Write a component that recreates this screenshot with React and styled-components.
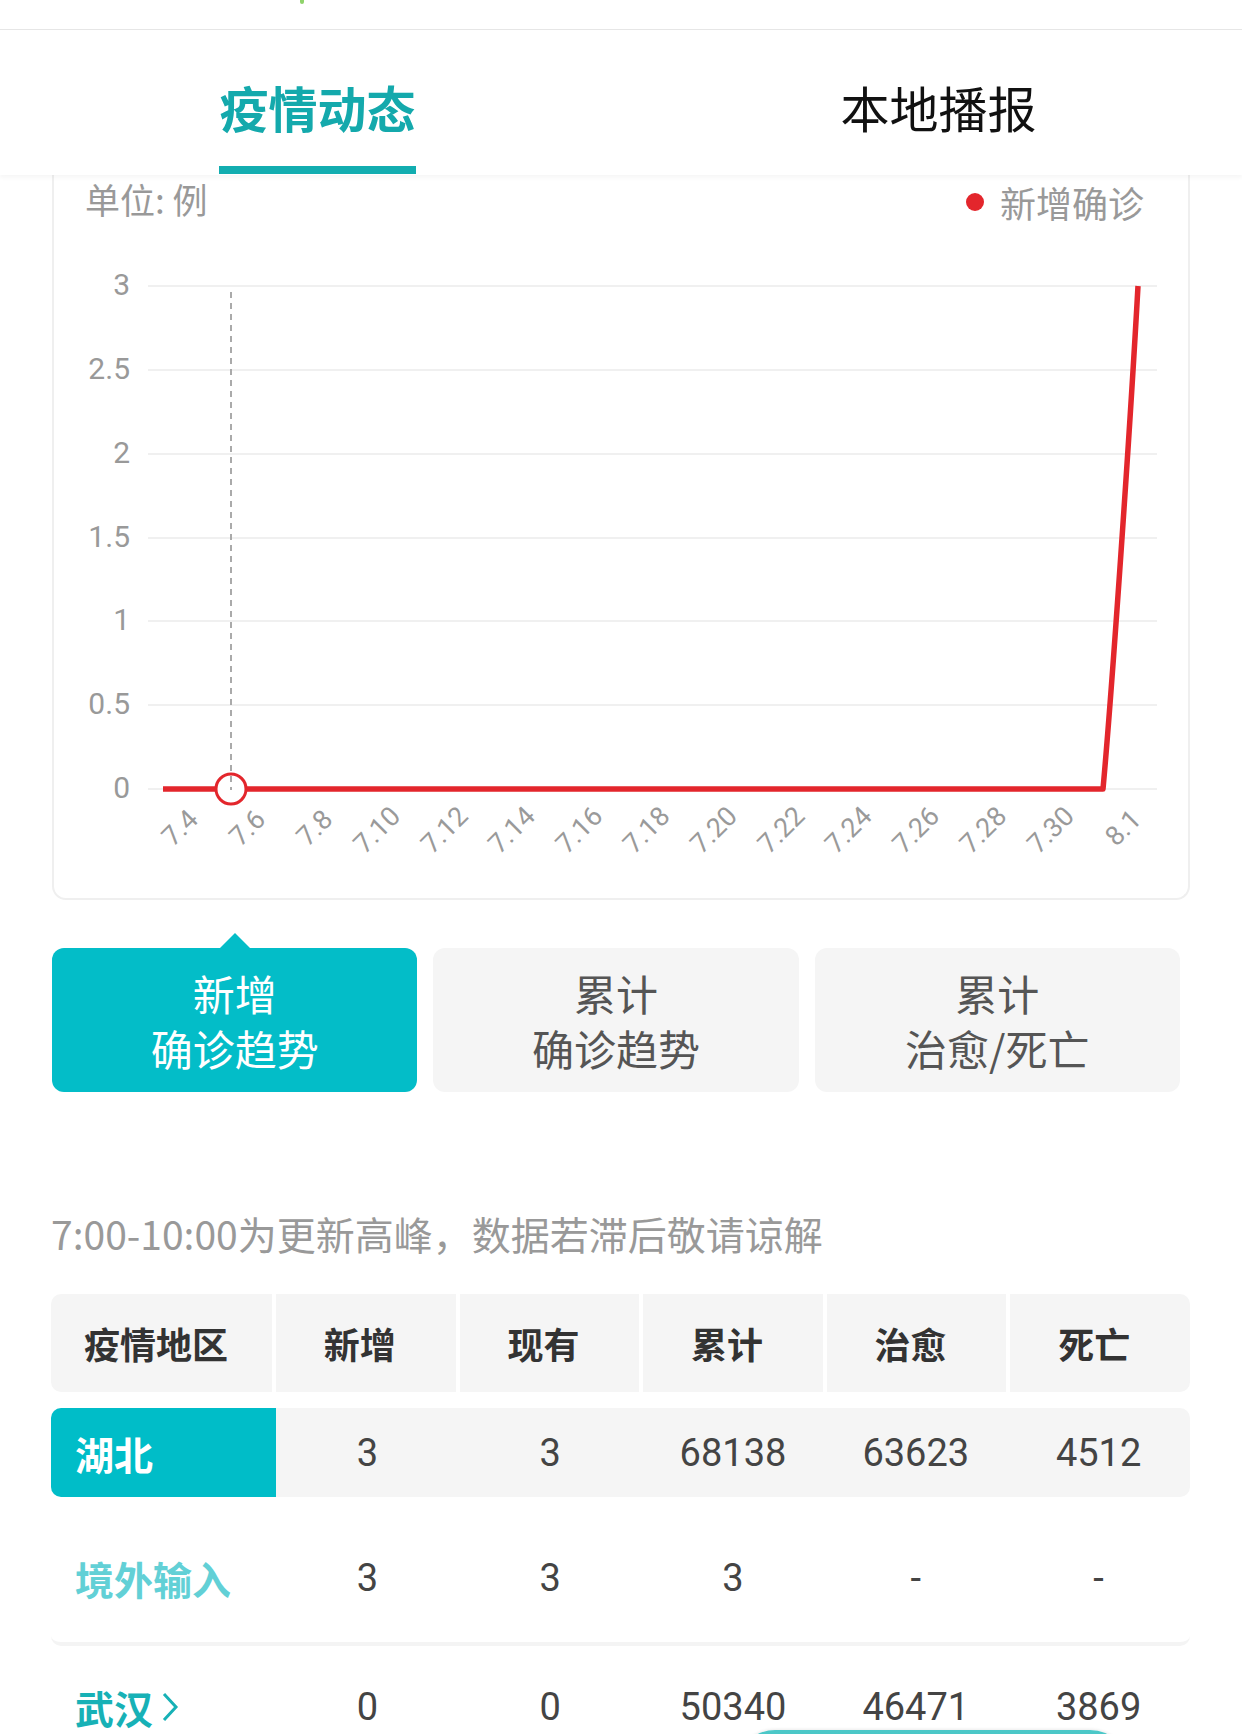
import React from "react";
import styled, { createGlobalStyle, css } from "styled-components";

const Global = createGlobalStyle`
  html, body { margin: 0; padding: 0; background: #fff; }
  body { width: 1242px; font-family: "Noto Sans CJK SC", "Noto Sans", sans-serif; overflow: hidden; }
  * { box-sizing: border-box; }
`;

const Page = styled.div`
  position: relative;
  width: 1242px;
  min-height: 1734px;
  overflow: hidden;
`;

const TopStrip = styled.div`
  height: 30px;
  border-bottom: 1px solid #e6e6e6;
  position: relative;
`;

const GreenSpeck = styled.span`
  position: absolute;
  left: 300px;
  top: 0;
  width: 4px;
  height: 4px;
  border-radius: 0 0 2px 2px;
  background: #8fd36b;
`;

const TabBar = styled.div`
  display: flex;
  height: 145px;
  padding-left: 7px;
  background: #fff;
  box-shadow: 0 3px 4px rgba(0, 0, 0, 0.035);
  position: relative;
  z-index: 1;
`;

const Tab = styled.div`
  flex: 0 0 621px;
  display: flex;
  justify-content: center;
`;

const TabInner = styled.div`
  display: flex;
  flex-direction: column;
  align-items: stretch;
  padding-top: 52px;
`;

const TabLabel = styled.div`
  font-size: 49px;
  line-height: 50px;
  font-weight: ${(p) => (p.$active ? 700 : 400)};
  color: ${(p) => (p.$active ? "#14a9ac" : "#111")};
`;

const TabLine = styled.div`
  margin-top: 34px;
  height: 8px;
  background: ${(p) => (p.$active ? "#12adb0" : "transparent")};
`;

const ChartCard = styled.div`
  margin: 0 52px;
  height: 725px;
  border: 2px solid #efefef;
  border-top: none;
  border-radius: 0 0 14px 14px;
  display: flex;
  flex-direction: column;
`;

const ChartHead = styled.div`
  height: 48px;
  display: flex;
  align-items: center;
  justify-content: space-between;
  padding: 0 44px 0 31px;
  color: #999;
`;

const Unit = styled.span`
  font-size: 35px;
  line-height: 40px;
`;

const Legend = styled.span`
  display: flex;
  align-items: center;
  gap: 16px;
  font-size: 36px;
  line-height: 40px;
  margin-top: 6px;
`;

const LegendDot = styled.span`
  width: 18px;
  height: 18px;
  border-radius: 50%;
  background: #e3262c;
`;

const Plot = styled.svg`
  display: block;
  font-family: Roboto, "Liberation Sans", sans-serif;
`;

const Buttons = styled.div`
  display: flex;
  gap: 16px;
  margin: 48px 62px 0 52px;
`;

const TrendBtn = styled.div`
  position: relative;
  flex: 1;
  height: 144px;
  border-radius: 12px;
  display: flex;
  flex-direction: column;
  align-items: center;
  justify-content: center;
  font-size: 42px;
  line-height: 55px;
  background: ${(p) => (p.$active ? "#03bdc8" : "#f5f5f5")};
  color: ${(p) => (p.$active ? "#fff" : "#555")};
  ${(p) =>
    p.$active &&
    css`
      &::before {
        content: "";
        position: absolute;
        top: -15px;
        left: 50%;
        transform: translateX(-50%);
        border-left: 16px solid transparent;
        border-right: 16px solid transparent;
        border-bottom: 16px solid #03bdc8;
      }
    `}
`;

const Notice = styled.div`
  margin: 119px 0 0 51px;
  font-size: 39px;
  line-height: 44px;
  color: #999;
`;

const Table = styled.div`
  margin: 39px 52px 0 51px;
`;

const HeadRow = styled.div`
  display: grid;
  grid-template-columns: 221px repeat(5, 1fr);
  column-gap: 4px;
  height: 98px;
`;

const HeadCell = styled.div`
  background: #f5f5f5;
  display: flex;
  align-items: center;
  justify-content: center;
  padding-right: 12px;
  font-size: 36px;
  font-weight: 700;
  color: #333;
  &:first-child {
    border-radius: 10px 0 0 10px;
    justify-content: flex-start;
    padding: 0 0 0 33px;
  }
  &:last-child { border-radius: 0 10px 10px 0; }
`;

const DataRow = styled.div`
  display: grid;
  grid-template-columns: 225px repeat(5, 1fr);
  align-items: center;
  margin-top: ${(p) => p.$mt || 0}px;
  height: ${(p) => p.$h}px;
  border-radius: 10px;
  overflow: hidden;
  background: ${(p) => (p.$shaded ? "#f5f5f5" : "transparent")};
  border-bottom: ${(p) => (p.$divider ? "4px solid #f4f4f4" : "none")};
`;

const RegionCell = styled.div`
  height: 100%;
  display: flex;
  align-items: center;
  gap: 8px;
  padding-left: 24px;
  font-size: 39px;
  font-weight: 700;
  color: ${(p) => p.$color};
  background: ${(p) => p.$bg || "transparent"};
`;

const NumCell = styled.div`
  text-align: center;
  font-family: Roboto, "Liberation Sans", sans-serif;
  font-size: 38px;
  color: #444;
`;

const FloatBtn = styled.div`
  position: absolute;
  left: 735px;
  top: 1730px;
  width: 395px;
  height: 80px;
  border-radius: 40px;
  background: linear-gradient(#4cc8c8, #2fb9bc);
  box-shadow: 0 -1px 3px rgba(0, 0, 0, 0.08);
`;

const Chevron = () => (
  <svg width="18" height="32" viewBox="0 0 18 32">
    <polyline points="3,3 15,16 3,29" fill="none" stroke="#17b1b6" strokeWidth="3" />
  </svg>
);

// chart coordinates: origin at (54, 223) in page space
const OX = 54;
const OY = 223;
const gridYs = [286, 370, 454, 538, 621, 705, 789];
const yLabels = ["3", "2.5", "2", "1.5", "1", "0.5", "0"];
const xLabels = ["7.4", "7.6", "7.8", "7.10", "7.12", "7.14", "7.16", "7.18", "7.20", "7.22", "7.24", "7.26", "7.28", "7.30", "8.1"];

const Chart = () => (
  <Plot width="1134" height="675" viewBox={`${OX} ${OY} 1134 675`}>
    {gridYs.map((y) => (
      <line key={y} x1="148" x2="1157" y1={y} y2={y} stroke="#f0f0f0" strokeWidth="2" />
    ))}
    {gridYs.map((y, i) => (
      <text key={"l" + y} x="130" y={y - 2} textAnchor="end" dominantBaseline="central" fontSize="30" fill="#999">
        {yLabels[i]}
      </text>
    ))}
    <path d="M163,789 L1103,789 C1112,690 1130,430 1138,286" fill="none" stroke="#e3262c" strokeWidth="5.5" strokeLinejoin="round" />
    <circle cx="231" cy="789" r="15" fill="#fff" stroke="#e3262c" strokeWidth="3" />
    <line x1="231" x2="231" y1="292" y2="790" stroke="#aaa" strokeWidth="2" strokeDasharray="6 5" />
    {xLabels.map((t, i) => {
      const cx = 180 + i * 67.36 - (t.length === 4 ? 5 : 0);
      const cy = t.length === 4 ? 830 : 828;
      return (
        <text
          key={t}
          x={cx}
          y={cy}
          textAnchor="middle"
          dominantBaseline="central"
          fontSize="27"
          fill="#9a9a9a"
          transform={`rotate(-45 ${cx} ${cy})`}
        >
          {t}
        </text>
      );
    })}
  </Plot>
);

const rows = [
  { name: "湖北", vals: ["3", "3", "68138", "63623", "4512"] },
  { name: "境外输入", vals: ["3", "3", "3", "-", "-"] },
  { name: "武汉", vals: ["0", "0", "50340", "46471", "3869"] },
];

export default function App() {
  return (
    <Page>
      <Global />
      <TopStrip>
        <GreenSpeck />
      </TopStrip>
      <TabBar>
        <Tab>
          <TabInner>
            <TabLabel $active>疫情动态</TabLabel>
            <TabLine $active />
          </TabInner>
        </Tab>
        <Tab>
          <TabInner>
            <TabLabel>本地播报</TabLabel>
            <TabLine />
          </TabInner>
        </Tab>
      </TabBar>

      <ChartCard>
        <ChartHead>
          <Unit>单位: 例</Unit>
          <Legend>
            <LegendDot />
            新增确诊
          </Legend>
        </ChartHead>
        <Chart />
      </ChartCard>

      <Buttons>
        <TrendBtn $active>
          <span>新增</span>
          <span>确诊趋势</span>
        </TrendBtn>
        <TrendBtn>
          <span>累计</span>
          <span>确诊趋势</span>
        </TrendBtn>
        <TrendBtn>
          <span>累计</span>
          <span>治愈/死亡</span>
        </TrendBtn>
      </Buttons>

      <Notice>7:00-10:00为更新高峰，数据若滞后敬请谅解</Notice>

      <Table>
        <HeadRow>
          {["疫情地区", "新增", "现有", "累计", "治愈", "死亡"].map((h) => (
            <HeadCell key={h}>{h}</HeadCell>
          ))}
        </HeadRow>
        <DataRow $mt={16} $h={89} $shaded>
          <RegionCell $color="#fff" $bg="#00bdc8">{rows[0].name}</RegionCell>
          {rows[0].vals.map((v, i) => (
            <NumCell key={i}>{v}</NumCell>
          ))}
        </DataRow>
        <DataRow $mt={16} $h={133} $divider>
          <RegionCell $color="#62d0d6">{rows[1].name}</RegionCell>
          {rows[1].vals.map((v, i) => (
            <NumCell key={i}>{v}</NumCell>
          ))}
        </DataRow>
        <DataRow $h={122}>
          <RegionCell $color="#17b1b6">
            {rows[2].name}
            <Chevron />
          </RegionCell>
          {rows[2].vals.map((v, i) => (
            <NumCell key={i}>{v}</NumCell>
          ))}
        </DataRow>
      </Table>
      <FloatBtn />
    </Page>
  );
}
